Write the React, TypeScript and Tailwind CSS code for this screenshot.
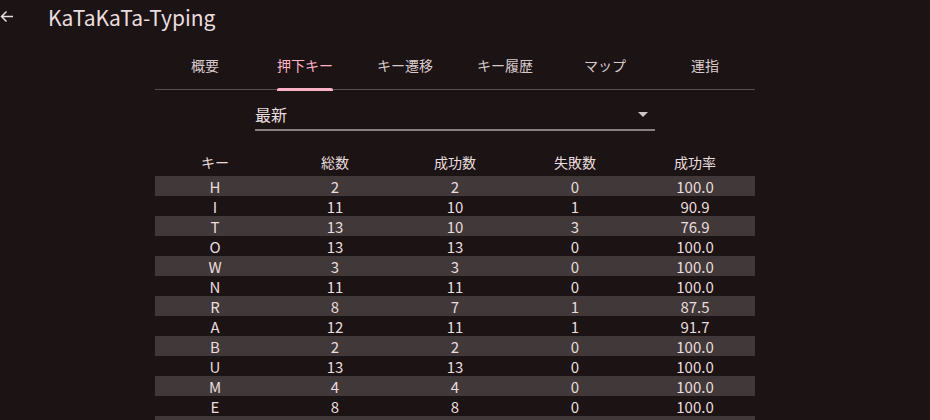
import React from "react";

const TABS = ["概要", "押下キー", "キー遷移", "キー履歴", "マップ", "運指"];

const ROWS: [string, number, number, number, string][] = [
  ["H", 2, 2, 0, "100.0"],
  ["I", 11, 10, 1, "90.9"],
  ["T", 13, 10, 3, "76.9"],
  ["O", 13, 13, 0, "100.0"],
  ["W", 3, 3, 0, "100.0"],
  ["N", 11, 11, 0, "100.0"],
  ["R", 8, 7, 1, "87.5"],
  ["A", 12, 11, 1, "91.7"],
  ["B", 2, 2, 0, "100.0"],
  ["U", 13, 13, 0, "100.0"],
  ["M", 4, 4, 0, "100.0"],
  ["E", 8, 8, 0, "100.0"],
];

const HEADERS = ["キー", "総数", "成功数", "失敗数", "成功率"];

export default function App() {
  return (
    <div
      className="h-screen overflow-hidden bg-[#1b1314] text-[#eaddde]"
      style={{ fontFamily: '"Noto Sans CJK JP", "Noto Sans", sans-serif' }}
    >
      <header className="flex h-[34px] items-center">
        <svg width="13" height="13" viewBox="0 0 13 13" className="mb-[2px] text-[#eaddde]">
          <path d="M13 6.5H1.5M6.5 1.5l-5 5 5 5" fill="none" stroke="currentColor" strokeWidth="1.5" />
        </svg>
        <h1 className="ml-[35px] text-[21px] leading-none text-[#eaddde]">KaTaKaTa-Typing</h1>
      </header>

      <div className="ml-[155px] w-[600px]">
        <nav className="mt-2 flex h-[48px] border-b border-[#574e4f]">
          {TABS.map((t, i) => (
            <div
              key={t}
              className={`relative flex w-[100px] items-center justify-center text-[14px] ${
                i === 1 ? "text-[#ffb1c6]" : "text-[#d8cacb]"
              }`}
            >
              {t}
              {i === 1 ? (
                <span className="absolute bottom-[-2px] left-1/2 h-[3px] w-[56px] -translate-x-1/2 rounded-t-[2px] bg-[#ffb1c6]" />
              ) : null}
            </div>
          ))}
        </nav>

        <div className="mx-auto mt-[9px] flex h-[32px] w-[400px] items-center justify-between border-b-2 border-[#878081]">
          <span className="text-[16px] text-[#eaddde]">最新</span>
          <svg width="10" height="5" viewBox="0 0 10 5" className="mr-[7px]">
            <path d="M0 0h10L5 5z" fill="#cfc4c5" />
          </svg>
        </div>

        <div className="mt-[18px]">
          <div className="grid h-[27px] grid-cols-5 items-center text-[14px]">
            {HEADERS.map((h) => (
              <div key={h} className="text-center">
                {h}
              </div>
            ))}
          </div>
          {ROWS.map((r, i) => (
            <div
              key={r[0]}
              className={`grid h-[20px] grid-cols-5 items-center text-[15px] leading-none ${
                i % 2 === 0 ? "bg-[#403839]" : ""
              }`}
            >
              {r.map((c, j) => (
                <div key={j} className="text-center">
                  {c}
                </div>
              ))}
            </div>
          ))}
          <div className="h-[20px] bg-[#403839]" />
        </div>
      </div>
    </div>
  );
}
